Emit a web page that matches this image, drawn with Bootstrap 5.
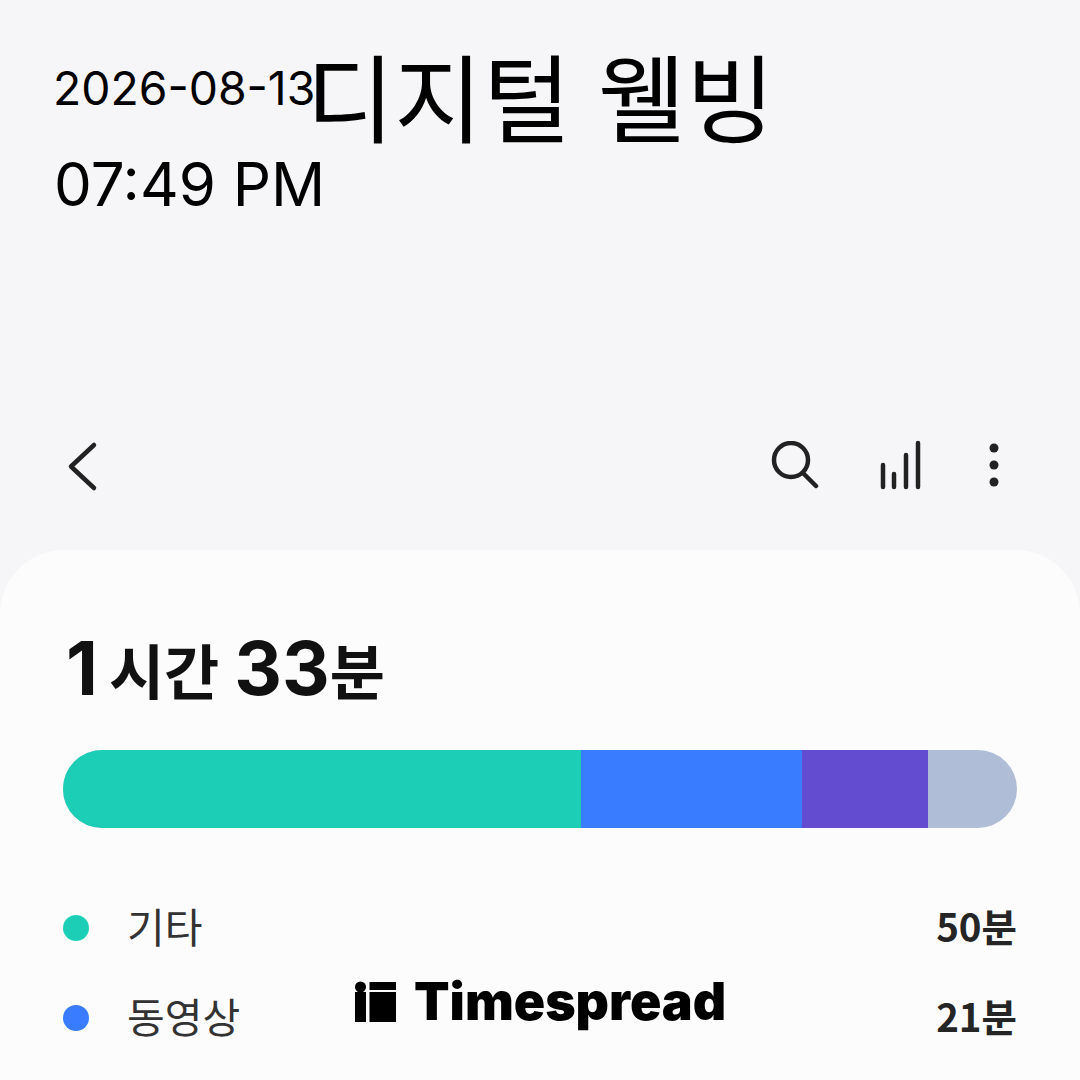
<!DOCTYPE html>
<html lang="ko">
<head>
    <meta charset="UTF-8">
    <meta name="viewport" content="width=device-width, initial-scale=1.0">
    <title>디지털 웰빙</title>
    <link href="https://cdn.jsdelivr.net/npm/bootstrap@5.3.0/dist/css/bootstrap.min.css" rel="stylesheet">
    <style>
        html, body { height: 100%; }
        body { background: #f6f6f8; font-family: "Inter", "Noto Sans CJK KR", sans-serif; color: #000; overflow: hidden; }
        .screen { height: 1080px; position: relative; overflow: hidden; }
        .head-area { padding: 46px 0 0 54px; height: 420px; }
        .stamp-col { width: 252px; }
        .stamp-date { font-size: 46.300px; line-height: 84px; white-space: nowrap; margin-left: -1px; }
        .stamp-time { font-size: 60px; line-height: 72px; margin-top: 18px; white-space: nowrap; }
        .page-title { font-family: "Noto Sans CJK KR", sans-serif; font-size: 96px; font-weight: 400; line-height: 92px; margin: 2px 0 0; white-space: nowrap; }
        .tool-row { height: 90px; padding: 0 80px 0 60px; }
        .tool-search { margin-right: 59px; }
        .tool-bars { margin-right: 66px; }
        .sheet { background: #fcfcfc; border-radius: 64px 64px 0 0; padding: 72px 63px 0; margin-top: 40px; height: 600px; }
        .total-time { font-family: "Noto Sans CJK KR", sans-serif; font-weight: 700; color: #111; font-size: 60px; line-height: 92px; margin-left: 3px; white-space: nowrap; }
        .total-time b { font-size: 74px; font-family: "Inter", sans-serif; font-weight: 700; }
        .time-unit { margin-left: 11px; margin-right: 15px; }
        .usage-bar { height: 78px; border-radius: 39px; margin-top: 35px; background: #afbed6; }
        .usage-part { height: 100%; }
        .legend-row { height: 90px; font-family: "Noto Sans CJK KR", sans-serif; color: #333; font-size: 41px; }
        .legend-list { margin-top: 55px; }
        .legend-dot { width: 26px; height: 26px; border-radius: 50%; margin-right: 38px; }
        .legend-label { padding-bottom: 4px; }
        .legend-value { font-weight: 700; color: #252525; font-size: 38.500px; padding-bottom: 4px; }
        .brand-mark { position: absolute; left: 354px; top: 972px; font-family: "Inter", sans-serif; font-weight: 900; font-size: 51.800px; line-height: 58px; gap: 17px; }
    </style>
</head>
<body>
    <div class="screen">
        <div class="head-area d-flex">
            <div class="stamp-col">
                <div class="stamp-date">2026-08-13</div>
                <div class="stamp-time">07:49 PM</div>
            </div>
            <h1 class="page-title">디지털 웰빙</h1>
        </div>

        <!-- 상단 아이콘 -->
        <div class="tool-row d-flex justify-content-between align-items-center">
            <svg width="40" height="60" viewBox="0 0 40 60" fill="none" stroke="#222" stroke-width="4.5" stroke-linecap="round" stroke-linejoin="round"><path d="M34 10 L11 31.500 L34 53"/></svg>
            <div class="d-flex align-items-center">
                <svg class="tool-search" width="48" height="48" viewBox="0 0 48 48" fill="none" stroke="#222" stroke-width="4.5" stroke-linecap="round"><circle cx="20" cy="19" r="17"/><path d="M32 32 L45 45"/></svg>
                <svg class="tool-bars" width="44" height="50" viewBox="0 0 44 50" fill="none" stroke="#222" stroke-width="4.5" stroke-linecap="round"><path d="M5 25V47M16 34V47M28 15V47M40 3V47"/></svg>
                <svg width="12" height="46" viewBox="0 0 12 46" fill="#222"><circle cx="6" cy="6" r="4.500"/><circle cx="6" cy="23" r="4.500"/><circle cx="6" cy="40" r="4.500"/></svg>
            </div>
        </div>

        <div class="sheet">
            <div class="total-time"><b>1</b><span class="time-unit">시간</span><b>33</b>분</div>
            <div class="usage-bar d-flex overflow-hidden">
                <div class="usage-part" style="width: 54.3%; background: #1dceb6"></div>
                <div class="usage-part" style="width: 23.2%; background: #3a7cff"></div>
                <div class="usage-part" style="width: 13.2%; background: #634ccf"></div>
            </div>
            <div class="legend-list">
                <div class="legend-row d-flex align-items-center">
                    <span class="legend-dot" style="background: #1dceb6"></span>
                    <span class="flex-grow-1 legend-label">기타</span>
                    <span class="legend-value">50분</span>
                </div>
                <div class="legend-row d-flex align-items-center">
                    <span class="legend-dot" style="background: #3a7cff"></span>
                    <span class="flex-grow-1 legend-label">동영상</span>
                    <span class="legend-value">21분</span>
                </div>
            </div>
        </div>

        <!-- 워터마크 -->
        <div class="brand-mark d-flex align-items-center">
            <svg width="43" height="41" viewBox="0 0 43 41" fill="#000"><circle cx="6.500" cy="6" r="5.500"/><rect x="1" y="11" width="11" height="30"/><rect x="15.500" y="1" width="26.500" height="8"/><rect x="15.500" y="11" width="26.500" height="30"/></svg>
            <span>Timespread</span>
        </div>
    </div>
    <script src="https://cdn.jsdelivr.net/npm/bootstrap@5.3.0/dist/js/bootstrap.bundle.min.js"></script>
</body>
</html>
